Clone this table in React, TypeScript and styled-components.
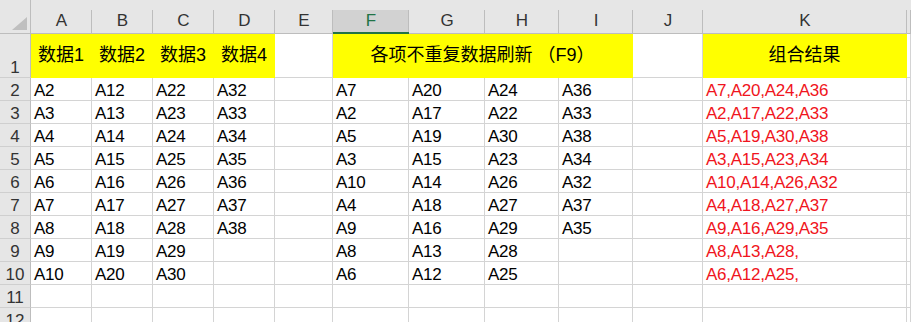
import React from 'react';
import styled, { createGlobalStyle } from 'styled-components';

const GlobalStyle = createGlobalStyle`
  html, body {
    margin: 0;
    padding: 0;
    background: #ffffff;
    overflow: hidden;
  }
  body {
    font-family: "Liberation Sans", "Noto Sans CJK SC", sans-serif;
  }
  * { box-sizing: border-box; }
`;

const GRID = '#d4d4d4';
const HEAD_BG = '#e6e6e6';
const HEAD_LINE = '#bdbdbd';
const YELLOW = '#ffff00';

const Sheet = styled.div`
  display: grid;
  grid-template-columns: 31px repeat(4, 61px) 58px 76px 76px 74px 74px 70px 204px 1fr;
  grid-template-rows: 34px 44px repeat(11, 23px);
  width: 911px;
  height: 322px;
  overflow: hidden;
  font-size: 17px;
  letter-spacing: -0.25px;
  color: #000;
`;

const Corner = styled.div`
  background: ${HEAD_BG};
  border-right: 1px solid ${HEAD_LINE};
  border-bottom: 1px solid ${HEAD_LINE};
  display: flex;
  align-items: flex-end;
  justify-content: flex-end;
  padding: 0 3px 3px 0;
`;

const ColHeader = styled.div<{ $selected?: boolean }>`
  background:
    linear-gradient(to bottom, ${HEAD_BG} 10px, transparent 10px),
    linear-gradient(to left, ${HEAD_LINE} 1px, transparent 1px),
    ${(p) => (p.$selected ? '#d2d2d2' : HEAD_BG)};
  border-bottom: ${(p) => (p.$selected ? '2px solid #217346' : `1px solid ${HEAD_LINE}`)};
  color: ${(p) => (p.$selected ? '#217346' : '#333')};
  display: flex;
  align-items: center;
  justify-content: center;
  padding-top: 10px;
  padding-bottom: ${(p) => (p.$selected ? '0' : '1px')};
  font-size: 17px;
  letter-spacing: 0;
`;

const RowHeader = styled.div`
  background: ${HEAD_BG};
  border-right: 1px solid ${HEAD_LINE};
  border-bottom: 1px solid #cfcfcf;
  color: #333;
  display: flex;
  align-items: flex-end;
  justify-content: center;
  line-height: 17px;
  padding-bottom: 1px;
  letter-spacing: 0;
`;

const Cell = styled.div<{ $fill?: string; $red?: boolean; $span?: number }>`
  grid-column: span ${(p) => p.$span ?? 1};
  background: ${(p) => p.$fill ?? '#ffffff'};
  border-right: 1px solid ${(p) => p.$fill ?? GRID};
  border-bottom: 1px solid ${(p) => p.$fill ?? GRID};
  color: ${(p) => (p.$red ? '#f01420' : '#000')};
  display: flex;
  align-items: flex-end;
  padding: 0 0 1px 3px;
  line-height: 17px;
  white-space: nowrap;
  overflow: hidden;
`;

const TitleCell = styled(Cell)`
  align-items: center;
  justify-content: center;
  padding: 0 0 1px 0;
  line-height: 20px;
  font-size: 18px;
  letter-spacing: 0;
`;

const COLS = ['A', 'B', 'C', 'D', 'E', 'F', 'G', 'H', 'I', 'J', 'K', ''];

const F = ['A7', 'A2', 'A5', 'A3', 'A10', 'A4', 'A9', 'A8', 'A6'];
const G = ['A20', 'A17', 'A19', 'A15', 'A14', 'A18', 'A16', 'A13', 'A12'];
const H = ['A24', 'A22', 'A30', 'A23', 'A26', 'A27', 'A29', 'A28', 'A25'];
const I = ['A36', 'A33', 'A38', 'A34', 'A32', 'A37', 'A35', '', ''];

const buildRows = (): string[][] => {
  const rows: string[][] = [];
  for (let i = 0; i < 10; i++) {
    if (i < 9) {
      const a = `A${i + 2}`;
      const b = `A${i + 12}`;
      const c = `A${i + 22}`;
      const d = i < 7 ? `A${i + 32}` : '';
      const k = [F[i], G[i], H[i], I[i]].join(',');
      rows.push([a, b, c, d, '', F[i], G[i], H[i], I[i], '', k, '']);
    } else {
      rows.push(['', '', '', '', '', '', '', '', '', '', '', '']);
    }
  }
  rows.push(['', '', '', '', '', '', '', '', '', '', '', '']);
  return rows;
};

const rows = buildRows();

export default function App() {
  return (
    <>
      <GlobalStyle />
      <Sheet>
        <Corner>
          <svg width="15" height="13" viewBox="0 0 15 13">
            <polygon points="15,0 15,13 0,13" fill="#bfbfbf" />
          </svg>
        </Corner>
        {COLS.map((c, i) => (
          <ColHeader key={`h${i}`} $selected={c === 'F'}>
            {c}
          </ColHeader>
        ))}

        <RowHeader>1</RowHeader>
        <TitleCell $fill={YELLOW}>数据1</TitleCell>
        <TitleCell $fill={YELLOW}>数据2</TitleCell>
        <TitleCell $fill={YELLOW}>数据3</TitleCell>
        <TitleCell $fill={YELLOW}>数据4</TitleCell>
        <Cell />
        <TitleCell $fill={YELLOW} $span={4}>
          各项不重复数据刷新 （F9）
        </TitleCell>
        <Cell />
        <TitleCell $fill={YELLOW}>组合结果</TitleCell>
        <Cell />

        {rows.map((r, ri) => (
          <React.Fragment key={`r${ri}`}>
            <RowHeader>{ri + 2}</RowHeader>
            {r.map((v, ci) => (
              <Cell key={`c${ri}-${ci}`} $red={ci === 10}>
                {v}
              </Cell>
            ))}
          </React.Fragment>
        ))}
      </Sheet>
    </>
  );
}
